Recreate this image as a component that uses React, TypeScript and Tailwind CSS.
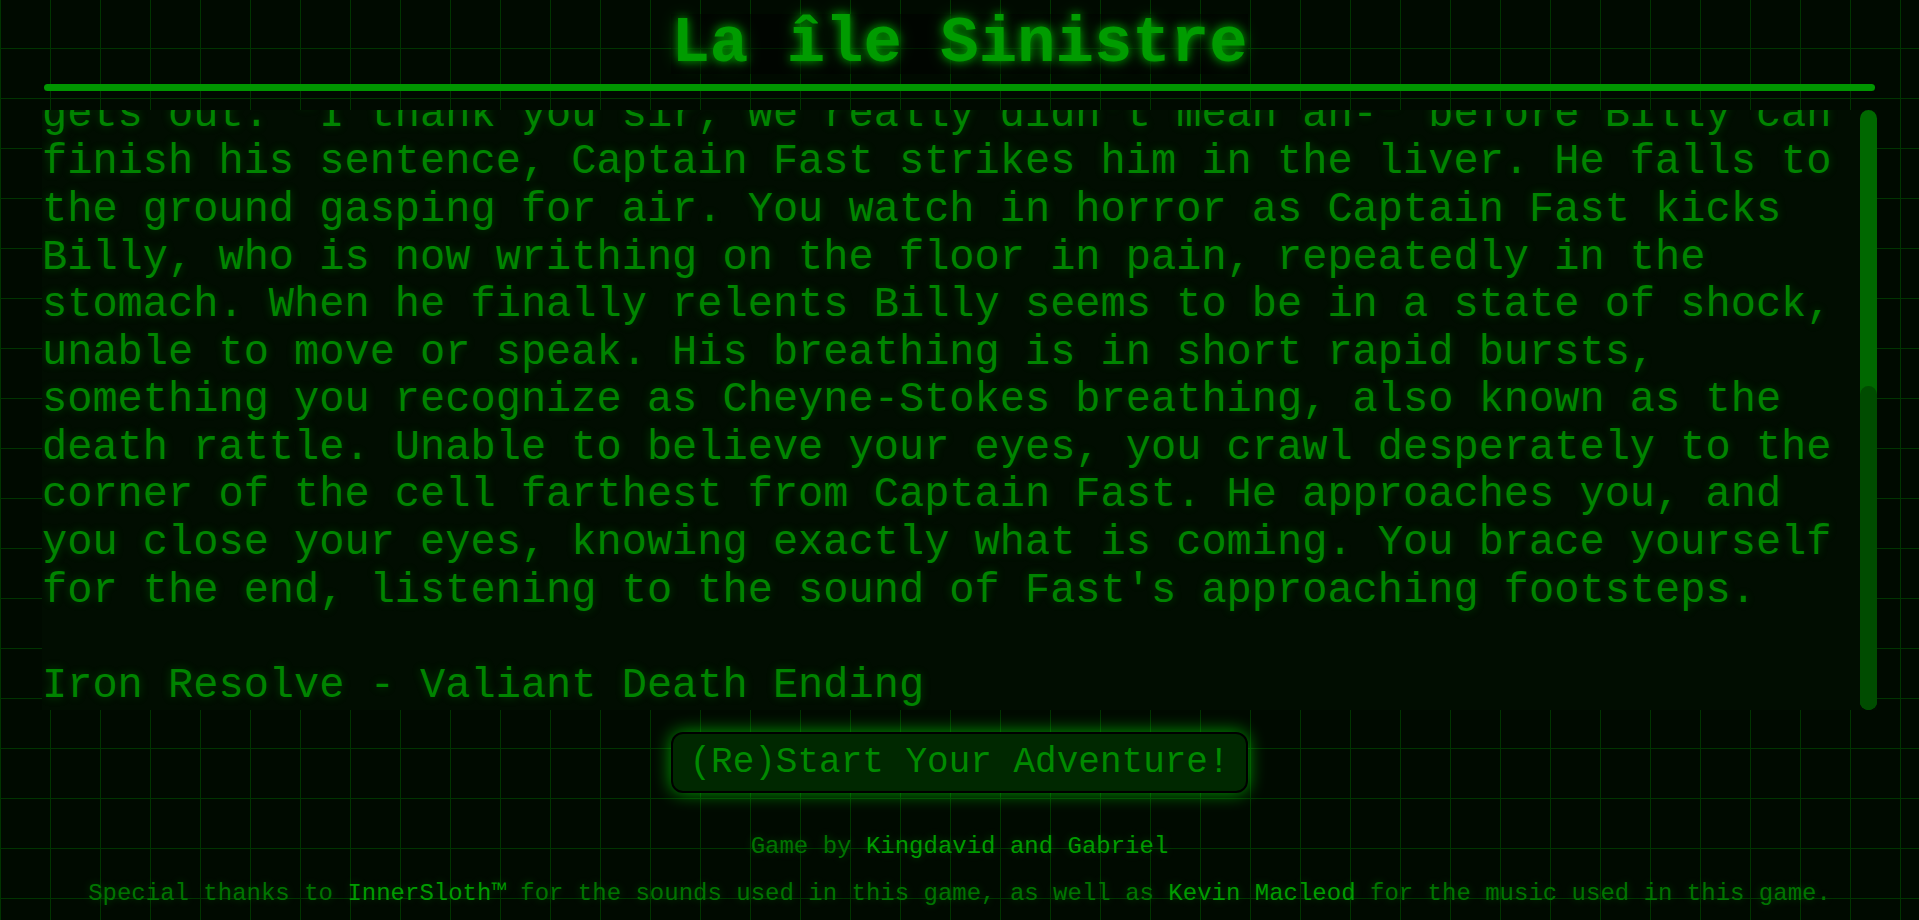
import { useEffect, useRef } from "react"

const story =
  'The heavy iron door of the cell creaks open and Captain Fast strides in, flanked by two guards. His boots echo against the damp stone walls as he looks down at the two of you with cold, unblinking eyes. Billy scrambles to his feet, his hands raised in front of him. "Captain, sir," he stammers, "this is all a big misunderstanding. We never meant to cause any trouble for you or your men." Captain Fast says nothing. He simply stares at Billy, his jaw tightening, and the silence in the cell grows heavier with every passing second. You try to catch Billy\'s eye to warn him to stop talking, but he is too frightened to notice. He keeps talking, pleading, his voice cracking with every word that he gets out. "I thank you sir, we really didn\'t mean an-" before Billy can finish his sentence, Captain Fast strikes him in the liver. He falls to the ground gasping for air. You watch in horror as Captain Fast kicks Billy, who is now writhing on the floor in pain, repeatedly in the stomach. When he finally relents Billy seems to be in a state of shock, unable to move or speak. His breathing is in short rapid bursts, something you recognize as Cheyne-Stokes breathing, also known as the death rattle. Unable to believe your eyes, you crawl desperately to the corner of the cell farthest from Captain Fast. He approaches you, and you close your eyes, knowing exactly what is coming. You brace yourself for the end, listening to the sound of Fast\'s approaching footsteps.'

export default function App() {
  const boxRef = useRef<HTMLDivElement>(null)

  // the story panel sits scrolled to its end
  useEffect(() => {
    if (boxRef.current) boxRef.current.scrollTop = boxRef.current.scrollHeight
  }, [])

  return (
    <div className="min-h-screen w-full overflow-hidden bg-[#000a00] bg-[linear-gradient(#003400_1px,transparent_1px),linear-gradient(90deg,#003400_1px,transparent_1px)] bg-[size:50px_50px] bg-[position:0px_-2px] [font-family:Liberation_Mono,Courier_New,monospace]">
      {/* Title */}
      <header className="flex flex-col items-center pt-[14px]">
        <h1 className="inline-block bg-black/50 text-[64px] leading-[60px] font-bold text-[#009c00] [text-shadow:0_0_10px_rgba(0,255,0,0.6),0_0_20px_rgba(0,255,0,0.3)]">
          La île Sinistre
        </h1>
      </header>
      <div className="mx-[44px] mt-[10px] h-[7px] rounded-full bg-[#009600]" />

      {/* Story */}
      <div className="mx-[42px] mt-[19px] flex h-[600px] bg-[#010d01]">
        <div
          ref={(el) => {
            boxRef.current = el
            if (el) el.scrollTop = el.scrollHeight
          }}
          className="h-full flex-1 overflow-hidden"
        >
          <div className="w-[1800px] text-[42px] leading-[1.133] text-[#008400] [text-shadow:0_0_10px_rgba(0,200,0,0.3)]">
            <p>{story}</p>
            <p className="mt-[47.6px]">Iron Resolve - Valiant Death Ending</p>
          </div>
        </div>
        {/* scrollbar */}
        <div className="flex h-full w-[17px] flex-col justify-end rounded-full bg-[#006800]">
          <div className="h-[324px] rounded-full bg-[#004c00]" />
        </div>
      </div>

      {/* Restart */}
      <div className="mt-[22px] flex justify-center">
        <button className="rounded-[12px] border-2 border-black bg-[#002800] px-4 py-2 text-[36px] leading-[41px] text-[#008a00] shadow-[0_0_18px_rgba(0,255,0,0.6)]">
          (Re)Start Your Adventure!
        </button>
      </div>

      {/* Credits */}
      <footer className="mt-[40px] text-center text-[24px] leading-[27px] text-[#007400] [text-shadow:0_0_8px_rgba(0,200,0,0.3)]">
        <p>
          Game by <span className="text-[#009c00]">Kingdavid and Gabriel</span>
        </p>
        <p className="mt-[20px]">
          Special thanks to <span className="text-[#009c00]">InnerSloth™</span> for the sounds used in this game, as well as{" "}
          <span className="text-[#009c00]">Kevin Macleod</span> for the music used in this game.
        </p>
      </footer>
    </div>
  )
}
